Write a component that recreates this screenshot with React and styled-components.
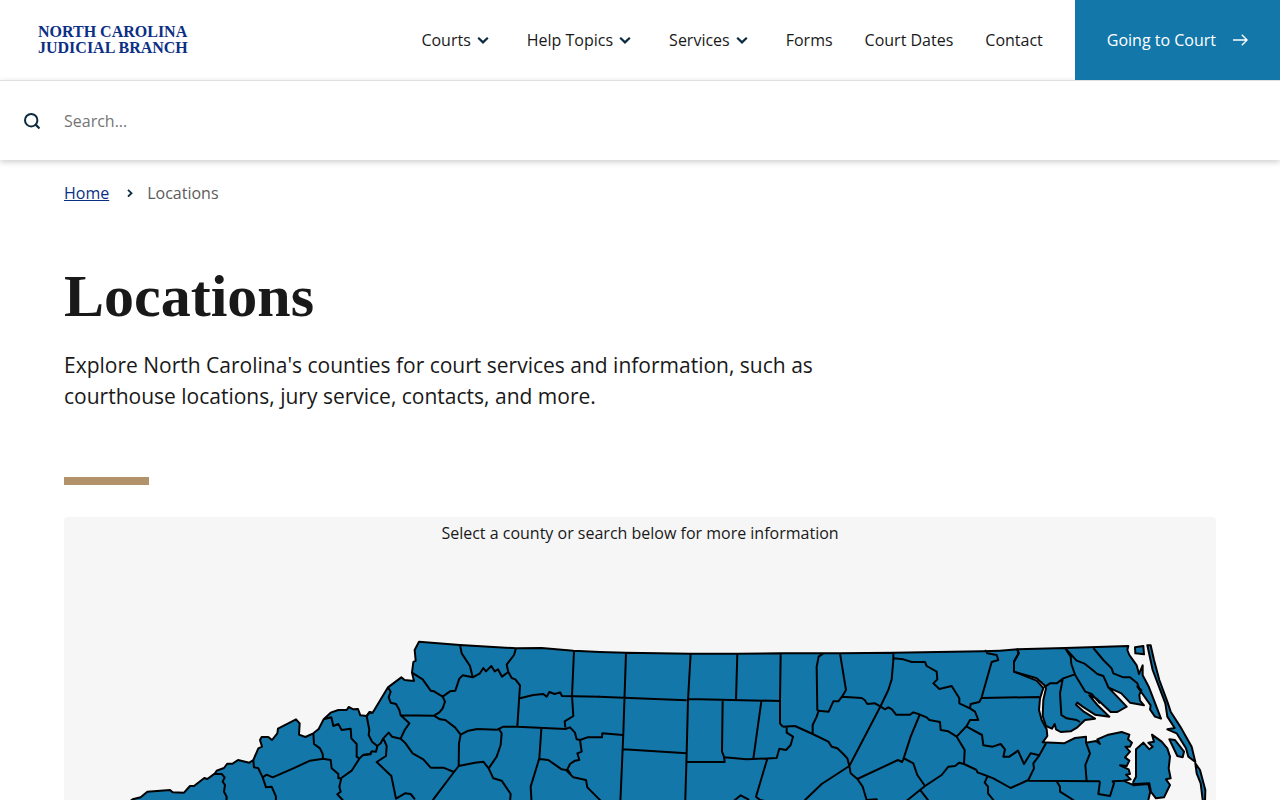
import React, { useState } from "react";
import styled, { createGlobalStyle } from "styled-components";

//header menu. menu: true shows the arrow next to the label
const NAV_ITEMS = [
  { label: "Courts", menu: true },
  { label: "Help Topics", menu: true },
  { label: "Services", menu: true },
  { label: "Forms" },
  { label: "Court Dates" },
  { label: "Contact" },
];

//The state is split into sections from west to east.
//at: where the section starts on the map, coast: outer line,
//close: how the fill of the section is closed, borders: county lines
const SECTIONS = [
  {
    at: "168 273",
    coast:
      "M10,520 L30,484 38,478 62,472 82,455 150,450 158,457 192,458 210,438 222,438 253,414 262,417 285,400 290,392 312,384 322,371 338,371 354,360 388,368 400,360 415,325 426,320 420,300 425,291 445,291 456,300 472,280 474,266 528,238 539,250 537,284 556,291 580,280 596,267 611,238 632,218 655,210 680,210 686,201 700,208 714,207 721,226 740,228 750,216 757,220",
    close: "L780,180 V520 Z",
    borders: [
      "M285,402 L305,402 314,412 308,425 315,435 312,455 320,470 318,510",
      "M400,362 L402,382 415,385 428,412 438,442 455,440 468,470 466,510",
      "M428,412 L440,404 458,412 520,385 570,362 610,356",
      "M580,280 L582,312 600,325 608,342 609,356 632,360 635,385 655,402 655,415 664,414 658,440 662,455 652,463 668,480 676,510",
      "M611,238 L634,232 640,258 655,252 665,270 692,266 694,295 710,312 710,350 718,356",
      "M664,414 L695,392 718,356 728,346 755,342",
    ],
  },
  {
    at: "888 243",
    coast:
      "M20,258 L28,246 38,248 84,172 124,142 134,150 162,153 156,128 160,96 167,92 164,60 177,35 300,45 468,55 545,54 640,62 720,66",
    close: "V550 H20 Z",
    borders: [
      "M20,258 L28,300 26,315 36,335 52,348 48,365 35,364 30,372 10,374",
      "M52,348 L62,340 70,325 86,308 96,320 122,326",
      "M70,325 L80,348 78,378 50,396 94,438 108,506 135,490 152,492 165,508",
      "M84,172 L92,185 86,202 92,218 108,222 118,240 122,256 148,280 134,300 122,326 135,338 158,370 190,388 212,413 250,413 282,426 296,408",
      "M122,256 L222,257 240,268 256,270 285,292 302,314 297,340 296,408",
      "M156,128 L188,148 212,182 222,184 248,200 255,215 248,235 238,247 222,257",
      "M248,200 L270,184 286,182 298,146 308,136 338,142 330,108 305,70 300,45",
      "M338,142 L360,130 370,114 378,124 394,108 404,124 414,118 426,140 445,126 440,104 462,75 468,55",
      "M445,126 L455,144 466,148 480,166 472,290",
      "M480,205 L520,195 550,192 560,200 568,186 584,192 600,187 606,198 720,200",
      "M642,62 L636,198 640,258 614,274 616,292",
      "M302,314 L325,302 352,297 412,299 430,290 472,290 616,297 630,292 645,308 650,328 660,330",
      "M416,296 L425,310 422,345 410,380 386,415",
      "M296,408 L345,398 370,395 386,415 400,445 425,452 452,492 448,540",
      "M282,426 L220,508 205,540",
      "M544,297 L538,385 512,470 516,540",
      "M538,387 L565,390 605,418 618,420 640,442 678,450 682,472 718,508 740,530",
      "M660,330 L665,365 652,370 658,390 645,392 630,402 622,418 632,432",
    ],
  },
  {
    at: "1488 273",
    coast: "M118,36 L198,38 392,41 532,41 662,40 720,40",
    close: "V520 H0 V28 Z",
    borders: [
      "M118,170 L190,173 380,181",
      "M198,38 L190,280 180,510",
      "M60,300 L82,292 126,292 127,280 188,285",
      "M392,41 L384,180 380,340 375,510",
      "M190,328 L380,340",
      "M384,177 L660,183",
      "M532,41 L528,180",
      "M662,40 L660,183 660,250 668,260",
      "M488,181 L486,335 492,350 494,366 382,366",
      "M492,352 L560,358 650,354 658,326 678,330 692,315 699,290 680,278 680,262",
      "M604,184 L580,356",
      "M622,356 L588,470 600,480 620,484",
      "M510,500 L522,482 542,466 565,478 570,500",
    ],
  },
  {
    at: "2088 273",
    coast: "M120,40 L240,40 400,38 665,34 720,32",
    close: "V520 H0 V41 Z",
    borders: [
      "M68,260 L105,258 158,282 205,305 215,320 232,325 250,342 262,355 268,378 272,400 292,417 308,440 320,480 350,478 360,500",
      "M190,40 L176,50 170,80 172,212",
      "M240,40 L258,150 246,170 235,184 220,184 206,215 176,212 170,230 158,255 158,282",
      "M246,170 L305,174 314,180 322,192 345,190 362,200 375,208 385,202 396,208 408,224 450,224 460,217 475,222 500,232 508,240 540,246 542,270 565,274 590,290 620,258 630,240 655,240 645,215 630,205 598,190 598,175 575,138 538,147 520,130 532,118 530,95 500,78 495,66 455,66 430,58 400,55",
      "M400,38 L400,60 395,118 385,150 362,198 268,378 185,432 135,480 120,500",
      "M480,222 L452,290 430,358 426,366 414,360 292,417",
      "M430,354 L460,370 472,405 495,438 440,482 420,500",
      "M495,438 L545,405 565,380 585,378 598,368 612,372 650,390",
      "M590,290 L614,330 612,372",
      "M482,452 L510,488 520,510",
      "M630,205 L632,192 658,186 665,172 695,66 715,60 710,45 682,40 675,30",
    ],
  },
  {
    at: "2688 273",
    coast:
      "M120,32 L172,28 176,40 162,65 162,95 230,122 250,144 240,175 237,210 245,240 260,268 262,288 248,307 312,310 345,294 378,290 378,308 408,303 420,312 412,298 445,284 485,276 508,284 504,298 516,308 510,320 496,320 510,335 495,352 508,362 500,378 480,376 506,388 510,402 498,404 512,418 490,422 515,433 568,430 572,450 565,480 560,520",
    close: "H0 V34 Z",
    borders: [
      "M65,174 L238,171",
      "M20,260 L66,285 70,316 98,320 122,312 135,328 130,350 148,350 174,332 192,372 212,340 238,346",
      "M50,390 L52,397 74,405 100,415 152,444 205,420 222,385 220,370 238,346 258,310",
      "M82,410 L74,428 84,440 84,460 100,480 110,500",
      "M290,424 L300,440 300,455 340,480 350,500",
      "M205,422 L420,424",
      "M378,308 L390,340 376,375 380,424",
      "M420,424 L415,462 450,468 462,430 458,424 490,422",
    ],
  },
  {
    at: "3048 273",
    coast:
      "M-188,28 L-45,24 145,18 142,30 148,45 160,62 170,76 177,102 188,76 188,106 207,142 243,236 225,230 210,208 212,196 190,165 172,140 184,150 178,165 180,182 192,196 150,188 124,160 85,142 140,200 112,216 92,216 50,176 28,166 52,195 88,230 45,224 8,200 -8,188 -12,194 10,214 45,236 15,240 -8,262 -28,274 -58,276 -72,268 -76,252 -84,266 -102,258 -112,228 -110,180 -102,145 -104,138 -130,115 -198,95 -198,65 -184,40 Z",
    close: "",
    borders: [
      "M-108,142 L-90,130 -70,130 -50,115 -18,104",
      "M-45,24 L-28,50 -26,72 -15,104 16,155 35,162 60,190",
      "M-45,24 L-10,62 12,70 35,88 52,102 70,108 80,130 85,142",
      "M40,24 L70,60 95,85 100,100 130,112 150,112 172,130 180,150",
      "M-52,118 L-60,160 -56,225 -40,235 -10,240 0,246",
    ],
  },
  {
    at: "3048 273",
    coast:
      "M160,436 L160,425 168,410 168,328 190,308 208,328 218,320 205,308 222,305 216,284 245,305 262,325 270,350 266,385 272,415 258,418 270,435 252,472 228,475 210,452 205,432 Z M165,22 L190,18 192,43 166,40 Z M202,16 L212,16 222,60 238,120 262,185 272,215 302,262 335,320 346,366 325,350 318,325 290,280 262,268 284,264 262,230 256,190 240,148 218,90 Z M346,370 L360,390 376,450 374,520 370,520 368,480 362,430 350,400 Z M268,298 L285,300 312,335 308,352 292,348 Z",
    close: "",
    borders: [],
  },
];

//ChevronIcon : small arrow, points down in the menu and right in the breadcrumb
const ChevronIcon = ({ right }) => (
  <svg width="24" height="24" viewBox="0 0 24 24" fill="none" aria-hidden="true">
    <path
      d={right ? "M12 8.8l3.5 3.4-3.5 3.4" : "M7.2 9.8l4.8 4.6 4.8-4.6"}
      stroke="#0c2b40"
      strokeWidth={right ? "1.8" : "2.2"}
    />
  </svg>
);

const CountyMap = () => (
  <MapDrawing viewBox="0 0 3456 780" role="img" aria-label="North Carolina counties">
    {/*fills first, so that no section covers the lines of its neighbour*/}
    {SECTIONS.map((section, i) => (
      <path
        key={i}
        className="land"
        d={`${section.coast} ${section.close}`}
        transform={`translate(${section.at})`}
      />
    ))}
    {SECTIONS.map((section, i) => (
      <path
        key={i}
        className="line"
        d={[section.coast, ...section.borders].join(" ")}
        transform={`translate(${section.at})`}
      />
    ))}
  </MapDrawing>
);

const App = () => {
  const [keyword, setKeyword] = useState("");

  return (
    <>
      <GlobalStyle />
      <Header>
        <Logo href="#home">
          North Carolina
          <br />
          Judicial Branch
        </Logo>
        <Nav>
          {NAV_ITEMS.map((item) =>
            item.menu ? (
              <NavButton key={item.label} type="button">
                {item.label}
                <ChevronIcon />
              </NavButton>
            ) : (
              <NavLink key={item.label} href="#nav">
                {item.label}
              </NavLink>
            )
          )}
        </Nav>
        <CourtLink href="#going-to-court">
          Going to Court
          <svg width="16" height="16" viewBox="0 0 16 16" fill="none" aria-hidden="true">
            <path d="M1 8h14M9.8 2.8L15 8l-5.2 5.2" stroke="#fff" strokeWidth="1.4" />
          </svg>
        </CourtLink>
      </Header>
      <SearchBar>
        <SearchButton type="submit" aria-label="Search">
          <svg width="16" height="16" viewBox="0 0 16 16" fill="none" aria-hidden="true">
            <circle cx="7.2" cy="7.2" r="6.2" stroke="#0c2b40" strokeWidth="2" />
            <path d="M11.4 11.4l4.1 4.1" stroke="#0c2b40" strokeWidth="2.2" />
          </svg>
        </SearchButton>
        <SearchInput
          type="text"
          aria-label="Search"
          placeholder="Search..."
          value={keyword}
          onChange={(e) => setKeyword(e.target.value)}
        />
      </SearchBar>
      <Main>
        <Breadcrumb>
          <a href="#home">Home</a>
          <ChevronIcon right />
          <span>Locations</span>
        </Breadcrumb>
        <Title>Locations</Title>
        <Intro>
          Explore North Carolina's counties for court services and information,
          such as courthouse locations, jury service, contacts, and more.
        </Intro>
        <Accent />
        <MapPanel>
          <p>Select a county or search below for more information</p>
          <CountyMap />
        </MapPanel>
      </Main>
    </>
  );
};

const GlobalStyle = createGlobalStyle`
  * {
    box-sizing: border-box;
  }
  body {
    margin: 0;
    background: #fff;
    color: #191919;
    font-family: "Open Sans", sans-serif;
    font-size: 16px;
    line-height: 24px;
  }
  svg {
    flex-shrink: 0;
  }
`;

const Header = styled.header`
  display: flex;
  align-items: center;
  height: 80px;
  padding-left: 38px;
  background: #fff;
`;

const Logo = styled.a`
  color: #0b2f84;
  font-family: "Liberation Serif", serif;
  font-size: 16px;
  font-weight: bold;
  line-height: 16px;
  text-decoration: none;
  text-transform: uppercase;
  white-space: nowrap;
`;

const Nav = styled.nav`
  display: flex;
  align-items: center;
  gap: 32px;
  margin-left: auto;
  padding-right: 32px;
`;

const NavLink = styled.a`
  color: #191919;
  text-decoration: none;
  white-space: nowrap;
`;

const NavButton = styled.button`
  display: flex;
  align-items: center;
  padding: 0;
  border: 0;
  background: transparent;
  color: #191919;
  font: inherit;
  white-space: nowrap;
  cursor: pointer;
`;

const CourtLink = styled.a`
  display: flex;
  align-items: center;
  gap: 16px;
  height: 100%;
  padding: 0 32px;
  background: #1477aa;
  color: #fff;
  font-weight: 500;
  text-decoration: none;
  white-space: nowrap;
`;

const SearchBar = styled.form`
  display: flex;
  align-items: center;
  height: 80px;
  border-top: 1px solid #dfdfdf;
  background: #fff;
  box-shadow: 0 2px 6px rgba(0, 0, 0, 0.2);
`;

const SearchButton = styled.button`
  display: flex;
  align-items: center;
  justify-content: center;
  width: 64px;
  height: 100%;
  padding: 0;
  border: 0;
  background: transparent;
  cursor: pointer;
`;

const SearchInput = styled.input`
  flex: 1;
  height: 100%;
  padding: 0;
  border: 0;
  outline: 0;
  background: transparent;
  font: inherit;
  &::placeholder {
    color: #757575;
  }
`;

const Main = styled.main`
  padding: 21px 64px 0;
`;

const Breadcrumb = styled.nav`
  display: flex;
  align-items: center;
  gap: 7px;
  color: #5c5c5c;
  a {
    color: #0b2f84;
  }
`;

const Title = styled.h1`
  margin: 55px 0 18px;
  font-family: "Liberation Serif", serif;
  font-size: 60px;
  font-weight: bold;
  line-height: 72px;
`;

const Intro = styled.p`
  max-width: 768px;
  margin: 0;
  font-size: 21px;
  line-height: 31px;
`;

const Accent = styled.div`
  width: 85px;
  height: 8px;
  margin: 65px 0 32px;
  background: #b1926a;
`;

const MapPanel = styled.section`
  padding-top: 4px;
  border-radius: 4px;
  background: #f6f6f6;
  p {
    margin: 0 0 4px;
    text-align: center;
  }
`;

const MapDrawing = styled.svg`
  display: block;
  width: 100%;
  .land {
    fill: #1477aa;
  }
  .line {
    fill: none;
    stroke: #000;
    stroke-width: 6px;
    stroke-linejoin: round;
  }
`;

export default App;
